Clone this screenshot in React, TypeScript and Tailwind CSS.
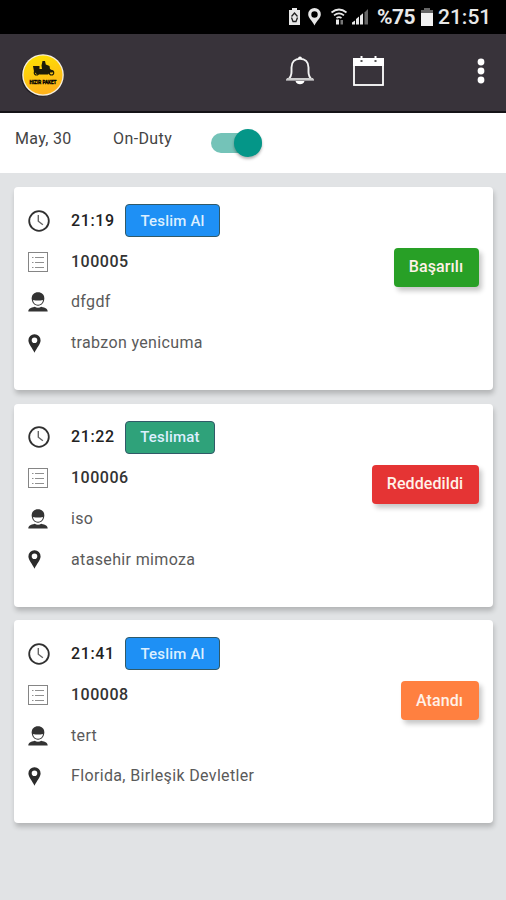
import React, { useState } from "react";

type Order = {
  id: string;
  time: string;
  type: string;
  typeClass: string;
  customer: string;
  address: string;
  status: string;
  statusClass: string;
};

const orders: Order[] = [
  {
    id: "100005",
    time: "21:19",
    type: "Teslim Al",
    typeClass: "w-[95px] bg-[#1e90f5]",
    customer: "dfgdf",
    address: "trabzon yenicuma",
    status: "Başarılı",
    statusClass: "w-[85px] bg-[#28a026]",
  },
  {
    id: "100006",
    time: "21:22",
    type: "Teslimat",
    typeClass: "w-[90px] bg-[#2fa27a]",
    customer: "iso",
    address: "atasehir mimoza",
    status: "Reddedildi",
    statusClass: "w-[107px] bg-[#e53434]",
  },
  {
    id: "100008",
    time: "21:41",
    type: "Teslim Al",
    typeClass: "w-[95px] bg-[#1e90f5]",
    customer: "tert",
    address: "Florida, Birleşik Devletler",
    status: "Atandı",
    statusClass: "w-[78px] bg-[#ff8040]",
  },
];

const ClockIcon = () => (
  <svg width="22" height="22" viewBox="0 0 22 22" fill="none">
    <circle cx="11" cy="11" r="9.8" stroke="#303030" strokeWidth="1.8" />
    <path d="M10.3 5v6.2l4.6 3.6" stroke="#666" strokeWidth="1.4" />
  </svg>
);

const ListIcon = () => (
  <svg width="20" height="20" viewBox="0 0 20 20" fill="none">
    <rect x="0.5" y="0.5" width="19" height="19" stroke="#858585" />
    <path
      d="M7 5.5h9M7 10.5h9M7 15.5h9M4 5.5h1.5M4 10.5h1.5M4 15.5h1.5"
      stroke="#909090"
    />
  </svg>
);

const UserIcon = () => (
  <svg width="20" height="20" viewBox="0 0 20 20">
    <path
      d="M10 .3C6.2.3 3.7 2.8 3.7 6.3c0 4.2 2.6 7.4 6.3 7.4s6.3-3.2 6.3-7.4C16.3 2.8 13.8.3 10 .3z"
      fill="#333"
    />
    <path
      d="M5 8c3.4.8 6.6.8 10 0-.2 2.9-2.3 4.800-5 4.800S5.200 10.900 5 8z"
      fill="#fff"
    />
    <path
      d="M.3 19.5c.2-2.6 2-3.6 6.5-4.7 1.6 1.2 4.8 1.2 6.4 0 4.5 1.1 6.3 2.1 6.5 4.7z"
      fill="#333"
    />
  </svg>
);

const PinIcon = () => (
  <svg width="13" height="19" viewBox="0 0 13 19">
    <path
      fillRule="evenodd"
      d="M6.5.3A6 6 0 0 0 .4 6.4C.4 10 4.5 14 6.5 18.7 8.5 14 12.6 10 12.6 6.4A6 6 0 0 0 6.5.3zm0 3.2a2.8 2.8 0 1 1 0 5.6 2.8 2.8 0 0 1 0-5.6z"
      fill="#2b2b2b"
    />
  </svg>
);

const StatusBar = () => (
  <div className="flex h-[34px] items-center bg-black pl-[288px] text-[#e8e8e8]">
    <svg width="84" height="20" viewBox="0 0 84 20" fill="currentColor">
      {/* battery saver */}
      <path d="M1 3h3V1h5v2h3v15H1z" />
      <path
        d="M3.5 9.5 6.5 6l3 3.5M3.5 10.5l1.5 4h3l1.5-4"
        fill="none"
        stroke="#222"
        strokeWidth="1.3"
      />
      {/* location */}
      <path
        fillRule="evenodd"
        d="M26.5 1a6.3 6.3 0 0 0-6.3 6.3c0 4 4 6.4 6.3 11.2 2.3-4.8 6.3-7.2 6.3-11.2A6.3 6.3 0 0 0 26.5 1zm0 3.3a3.2 3.2 0 1 1 0 6.4 3.2 3.2 0 0 1 0-6.4z"
      />
      {/* wifi */}
      <path
        d="M43.5 5.5q7.5-6 15 0M46 8.3q5-4 10 0M48.5 11q2.5-1.8 5 0"
        fill="none"
        stroke="currentColor"
        strokeWidth="1.7"
      />
      <path d="M48 12.5h3v5h-3z" />
      <path d="M52.5 13h2.5v4.5h-2.5z" fill="#777" />
      {/* signal */}
      <path d="M64 17.5v-2l3-2v4zM68 17.5v-5.5l3-2.5v8zM72 17.5V8.8l3-2.500v11.200z" />
      <path d="M76.5 17.5V5.5l3.5-3.5v15.5z" fill="#666" />
    </svg>
    <span className="ml-[5px] w-[44px] pt-px text-[21px] font-bold leading-none tracking-[-0.5px]">
      %75
    </span>
    <svg width="12" height="18" viewBox="0 0 12 18">
      <path d="M3 0h6v2h3v4H0V2h3z" fill="#666" />
      <path d="M0 5h12v13H0z" fill="#f2f2f2" />
    </svg>
    <span className="ml-[5px] pt-px text-[21px] font-medium leading-none">21:51</span>
  </div>
);

const Logo = () => (
  <svg width="44" height="44" viewBox="0 0 44 44">
    <defs>
      <linearGradient id="logo-bg" x1="0" y1="0" x2="0.3" y2="1">
        <stop offset="0" stopColor="#fde500" />
        <stop offset="1" stopColor="#ffb31a" />
      </linearGradient>
    </defs>
    <circle cx="20.5" cy="23" r="20.5" fill="#211e24" />
    <circle cx="22" cy="22" r="20.8" fill="#f5efe0" />
    <circle cx="22" cy="22" r="19.5" fill="url(#logo-bg)" />
    {/* courier on a motorbike */}
    <path
      d="M12 13h6.5v3h2.5l-.5-3.5 1-4.5h2.5l.8 3.500 3.700 1.500.5 3 3.500 2-1 1.500h-2.500l-2 2h-8l-3.500-.5-2.500-2.500z"
      fill="#1d1b08"
    />
    <circle cx="15.5" cy="19.8" r="2.2" fill="none" stroke="#1d1b08" strokeWidth="1.2" />
    <circle cx="30.5" cy="19.8" r="2.2" fill="none" stroke="#1d1b08" strokeWidth="1.2" />
    <text
      x="22"
      y="31"
      textAnchor="middle"
      textLength="27"
      lengthAdjust="spacingAndGlyphs"
      fontSize="5.5"
      fontWeight="900"
      fill="#000"
      stroke="#000"
      strokeWidth="0.3"
    >
      HIZIR PAKET
    </text>
  </svg>
);

const Header = () => (
  <header className="flex h-[79px] items-center border-b-2 border-[#151317] bg-[#38333a] pb-[4px]">
    <div className="ml-[21px] mt-[9px]">
      <Logo />
    </div>
    <button className="ml-[221px]">
      <svg width="28" height="31" viewBox="0 0 28 31" fill="none">
        <path
          d="M2 24.5c2.5-2 3.5-4 3.5-7.5v-4.5C5.5 7 9 3.7 14 3.7s8.5 3.3 8.5 8.8V17c0 3.5 1 5.5 3.5 7.5z"
          stroke="#f3f3f3"
          strokeWidth="1.9"
        />
        <path d="M12 3.5a2 2 0 0 1 4 0z" fill="#fff" />
        <path d="M1 23h26l1 2H0z" fill="#ccc" />
        <path d="M9.5 26h9c-1 4.3-8 4.3-9 0z" fill="#fff" />
      </svg>
    </button>
    <button className="ml-[39px]">
      <svg width="31" height="30" viewBox="0 0 31 30">
        <rect x="1" y="3" width="29" height="26" fill="none" stroke="#fff" strokeWidth="1.8" />
        <path d="M0 2h31v8H0z" fill="#fff" />
        <path d="M7.5 0h2v3h-2zM21.5 0h2v3h-2z" fill="#fff" />
        <path d="M7.5 4h2v2h-2zM21.5 4h2v2h-2z" fill="#555" />
      </svg>
    </button>
    <button className="ml-[93px]">
      <svg width="8" height="26" viewBox="0 0 8 26" fill="#fff">
        <circle cx="4" cy="4" r="3.4" />
        <circle cx="4" cy="13" r="3.4" />
        <circle cx="4" cy="22" r="3.4" />
      </svg>
    </button>
  </header>
);

const OrderCard: React.FC<{ order: Order }> = ({ order }) => (
  <div className="flex h-[203px] justify-between rounded-[4px] bg-white pl-[14px] pr-[14px] pt-[13.4px] shadow-[1px_4px_5px_rgba(0,0,0,0.2)]">
    <div className="text-[16px] tracking-[0.35px] text-[#5a5a5a]">
      <div className="flex h-[40.8px] items-center">
        <div className="w-[43px]">
          <ClockIcon />
        </div>
        <span className="w-[54px] font-medium tracking-[0.6px] text-[#222]">{order.time}</span>
        <span
          className={`${order.typeClass} flex h-[33px] items-center justify-center rounded-[4px] border border-[#315a68] text-[15px] font-medium tracking-[0.2px] text-[#dcefff]`}
        >
          {order.type}
        </span>
      </div>
      <div className="flex h-[40.8px] items-center">
        <div className="w-[43px]">
          <ListIcon />
        </div>
        <span className="font-medium tracking-[0.5px] text-[#333]">{order.id}</span>
      </div>
      <div className="flex h-[40.8px] items-center">
        <div className="w-[43px]">
          <UserIcon />
        </div>
        <span>{order.customer}</span>
      </div>
      <div className="flex h-[40.8px] items-center">
        <div className="w-[43px]">
          <PinIcon />
        </div>
        <span>{order.address}</span>
      </div>
    </div>
    <button
      className={`${order.statusClass} mt-[47.6px] flex h-[39px] items-center justify-center rounded-[4px] pr-px text-[16px] font-medium tracking-[0.1px] text-[#fff1e8] shadow-[3px_4px_5px_rgba(0,0,0,0.22)]`}
    >
      {order.status}
    </button>
  </div>
);

const App: React.FC = () => {
  const [onDuty, setOnDuty] = useState(true);

  return (
    <div className="min-h-screen w-full bg-[#e1e3e5] font-['Roboto',sans-serif]">
      <StatusBar />
      <Header />

      {/* Duty bar */}
      <div className="flex h-[60px] bg-white pl-[15px] pt-[14px] text-[16px] text-[#444]">
        <span className="w-[98px] tracking-[0.3px]">May, 30</span>
        <span className="w-[98px] tracking-[0.4px]">On-Duty</span>
        <button
          onClick={() => setOnDuty(!onDuty)}
          className={`mt-[6px] flex h-[20px] w-[51px] items-center rounded-full ${
            onDuty ? "justify-end bg-[#74c3b8]" : "justify-start bg-gray-300"
          }`}
        >
          <span className="size-[28px] rounded-full bg-[#049688] shadow-[0_2px_3px_rgba(0,0,0,0.3)]" />
        </button>
      </div>

      <div className="flex flex-col gap-[13.6px] pl-[14px] pr-[13px] pt-[14px]">
        {orders.map((order) => (
          <OrderCard key={order.id} order={order} />
        ))}
      </div>
    </div>
  );
};

export default App;
